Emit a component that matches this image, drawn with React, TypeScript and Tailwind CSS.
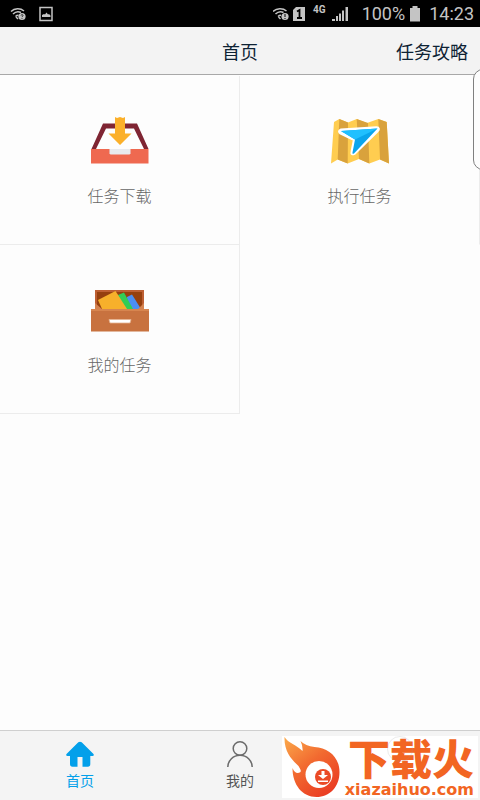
import React, { useState } from 'react';

const StatusBar = () => (
  <div className="flex h-[27px] items-center justify-between bg-black px-[6px] font-[Roboto,sans-serif] text-[#c4c4c4]">
    <div className="flex items-center gap-3 pl-1">
      <svg className="h-4 w-4" viewBox="0 0 16 16" fill="none" stroke="currentColor" strokeWidth="1.5">
        <path d="M1 5.500C4.500 2 10.500 2 14 5M3 8c2.500-2.500 6-2.500 8-1.500M5.500 10.500c1-1 2-1.200 3-1.200" />
        <path d="M6 11l2 2" />
        <circle cx="12" cy="10.500" r="3.600" fill="currentColor" stroke="none" />
        <path d="M11 9.500c.2-1.300 2.200-1 2 0 0 .8-1 .8-1 1.600M12 12v.8" stroke="#000" strokeWidth="0.8" />
      </svg>
      <svg className="h-4 w-4" viewBox="0 0 16 16">
        <path d="M2 1.500h12v13H2z" fill="none" stroke="currentColor" strokeWidth="1.500" />
        <path d="M4 11V9l2-1 1 .5L8.500 6.500l1.500 2L11 8l1.500 1.500V11z" fill="currentColor" />
      </svg>
    </div>
    <div className="flex items-center">
      <svg className="mr-1 h-4 w-4" viewBox="0 0 16 16" fill="none" stroke="currentColor" strokeWidth="1.500">
        <path d="M0 5.500C3.500 2 10 2 13.500 5M2.500 8c2.500-2.500 6-2.500 8-1.500M5 10.500c1-1 2-1.200 3-1.200" />
        <path d="M5.500 11l2 2" />
        <circle cx="12" cy="10.500" r="3.600" fill="currentColor" stroke="none" />
        <path d="M12 8v3M12 12v1" stroke="#000" strokeWidth="1" />
      </svg>
      <svg className="mr-2 h-4 w-3" viewBox="0 0 12 16">
        <path d="M3 1h9v14H0V4z" fill="currentColor" />
        <path d="M4 5.500L6.500 4v8M4 12h5" fill="none" stroke="#000" strokeWidth="1.800" />
      </svg>
      <span className="mr-[6px] h-5 text-[10px] leading-3 font-bold">4G</span>
      <svg className="mr-[14px] h-4 w-4" viewBox="0 0 16 16" fill="currentColor">
        <path d="M0 13h3v2H0zM4 10h2v5H4zM7 7.500h2V15H7zM10 4.500h2V15h-2zM13.500 1H16v14h-2.500z" />
      </svg>
      <span className="mr-1 text-[18px] leading-7">100%</span>
      <svg className="mr-2 h-4 w-3" viewBox="0 0 12 16" fill="currentColor">
        <path d="M3.500 0h5v2H11v13.500H1V2h2.500z" />
      </svg>
      <span className="text-[18px] leading-7">14:23</span>
    </div>
  </div>
);

const DownloadIcon = () => (
  <svg className="h-[60px] w-[60px]" viewBox="0 0 60 60">
    <path d="M1.500 38L13 12.500h34L58.500 38H54L44 17.500H16L6 38z" fill="#7f2533" />
    <path d="M1 38h57.500v14.500H1z" fill="#ef6950" />
    <path d="M19.500 38h21v4.500l-1 1h-19l-1-1z" fill="#e8eaee" />
    <path d="M25 6l2 1 3-1 3 1 2-1v16.500h6.500L30 34 18.500 22.500H25z" fill="#fbb02a" />
  </svg>
);

const MapIcon = () => (
  <svg className="h-[60px] w-[60px]" viewBox="0 0 60 60">
    <path d="M4 11l5.300-3L18 11.500 26.700 8 37 12 48.300 8l8.400 3L59 52.500l-9-4-10.700 4L29 48l-11.300 4.500-10-4-6.700 4z" fill="#ffcd50" />
    <path d="M9.300 8L18 11.500l-.3 41-10-4zM26.700 8L38 12l1.300 40.500L29 48zM48.300 8l8.400 3L59 52.500l-9-4z" fill="#d9a23c" />
    <path d="M11 19.500L46.500 17.300q2.500 0 .5 2.200L24 42q-2 1-1.500-1L25 28.500 11 21.800q-2-1.300 0-2.300z" fill="#19b5f5" stroke="#fff" strokeWidth="4" strokeLinejoin="round" />
    <path d="M11 20l36.500-2.500L24 42.500q-2 1-1.500-1L25 28.500z" fill="#0aa5ec" />
    <path d="M11 20l36.500-2.500L25 28.500z" fill="#20c0ff" />
  </svg>
);

const BoxIcon = () => (
  <svg className="h-[60px] w-[60px]" viewBox="0 0 60 60">
    <path d="M5 10h49v20H5z" fill="#bd5f33" />
    <path d="M7 12h45v18H7z" fill="#96400f" />
    <path d="M37 17l5-2.500L51 29H38z" fill="#4b8ff5" />
    <path d="M28 15l6-2.500L43 29H30z" fill="#32cd55" />
    <path d="M8 20l17.500-9L37 29H12z" fill="#f7b02b" />
    <path d="M5 23l7 6H5zM54 23l-6 6h6z" fill="#d5834f" />
    <path d="M1 29h58v22.500H1z" fill="#c8723f" />
    <path d="M1 29h58v2H1z" fill="#d7854f" />
    <path d="M19 39.500h22L40 43H20z" fill="#fff" stroke="#e5b391" strokeWidth="0.800" />
  </svg>
);

type TileProps = {
  label: string;
  icon: React.ReactNode;
  className?: string;
};

const Tile: React.FC<TileProps> = ({ label, icon, className = '' }) => (
  <button className={`flex h-[169px] flex-col items-center border-r border-b pt-[35px] ${className}`}>
    {icon}
    <span className="mt-3 text-[16px] leading-6 font-light text-[#666]">{label}</span>
  </button>
);

const HomeIcon = () => (
  <svg className="h-7 w-7" viewBox="0 0 28 28" fill="#03a0ea">
    <path d="M12.300 2.300q1.700-1.300 3.400 0L27.500 14q.9 1.700-1 2H24.300v8q0 2.800-2.500 2.800H16.500V17h-5v9.800H6.500Q4 26.800 4 24v-8H1.500q-1.900-.3-1-2z" />
  </svg>
);

const UserIcon = () => (
  <svg className="h-7 w-7" viewBox="0 0 28 28" fill="none" stroke="#6b6b6b" strokeWidth="1.500">
    <circle cx="14" cy="8.500" r="6.800" />
    <path d="M1.800 27A12.200 11.700 0 0 1 26.200 27" />
  </svg>
);

const Watermark = () => (
  <div className="absolute right-[2px] bottom-[2px] flex h-[62px] w-[196px] bg-white">
    <svg className="h-[62px] w-[58px] shrink-0" viewBox="0 0 58 62">
      <defs>
        <linearGradient id="flame" x1="0" y1="0" x2="0.700" y2="1">
          <stop offset="0" stopColor="#fbaa4b" />
          <stop offset="0.500" stopColor="#f26a30" />
          <stop offset="1" stopColor="#ea3d23" />
        </linearGradient>
      </defs>
      <path d="M2.500 1C6 7 15 9 20.500 15q.5-5-2-10 5 5 14 6c14 1 25 10 25 25 0 15-10 25-23 25-14 0-24-12-24-29 2 5 5 6 8 4 1-2-1-4-2-6C10 24 2 16 2.500 1z" fill="url(#flame)" />
      <circle cx="37" cy="38.500" r="13.500" fill="#fff" />
      <circle cx="41" cy="41" r="8" fill="#eb4a26" />
      <path d="M39.500 35h3v4H46l-5 4-5-4h3.500zM36 44.500h10V46H36z" fill="#fff" />
    </svg>
    <div className="flex grow flex-col items-end justify-between pr-1 whitespace-nowrap text-[#f26522]">
      <span className="text-[42px] leading-[42px] font-black">下载火</span>
      <span className="font-['DejaVu_Sans'] text-[16px] leading-4 font-bold">xiazaihuo.com</span>
    </div>
    <div className="absolute top-0 left-[105px] h-[26px] w-[26px] rounded-full border border-[#999]/20" />
  </div>
);

const tabs = [
  { id: 'home', label: '首页', icon: <HomeIcon /> },
  { id: 'mine', label: '我的', icon: <UserIcon /> },
];

const App: React.FC = () => {
  const [active, setActive] = useState('home');

  return (
    <div className="relative flex min-h-screen flex-col overflow-hidden bg-[#fdfdfd] font-['Noto_Sans_CJK_SC',sans-serif]">
      <StatusBar />
      <header className="grid h-12 grid-cols-3 items-center border-b border-[#a8a8a8] bg-[#f3f3f3] px-3 text-[#0d2233]">
        <h1 className="col-start-2 text-center text-[18px] leading-7">首页</h1>
        <button className="text-right text-[18px] leading-7">任务攻略</button>
      </header>

      <main className="grow pt-px">
        <div className="grid grid-cols-2">
          <Tile label="任务下载" icon={<DownloadIcon />} className="border-[#ececec]" />
          <Tile label="执行任务" icon={<MapIcon />} className="border-r-[#ececec] border-b-transparent" />
          <Tile label="我的任务" icon={<BoxIcon />} className="border-[#ececec]" />
        </div>
      </main>

      <nav className="grid h-[70px] grid-cols-3 border-t border-[#cfcfcf] bg-[#f4f4f4]">
        {tabs.map((tab) => (
          <button key={tab.id} className="flex flex-col items-center pt-[9px]" onClick={() => setActive(tab.id)}>
            {tab.icon}
            <span className={`mt-[2px] text-[14px] leading-5 ${active === tab.id ? 'text-[#03a0ea]' : 'text-[#555]'}`}>
              {tab.label}
            </span>
          </button>
        ))}
      </nav>

      <div className="absolute top-[69px] -right-[13px] h-[101px] w-5 rounded-[10px] border border-[#808080] bg-[#fdfdfd]" />
      <Watermark />
    </div>
  );
};

export default App;
